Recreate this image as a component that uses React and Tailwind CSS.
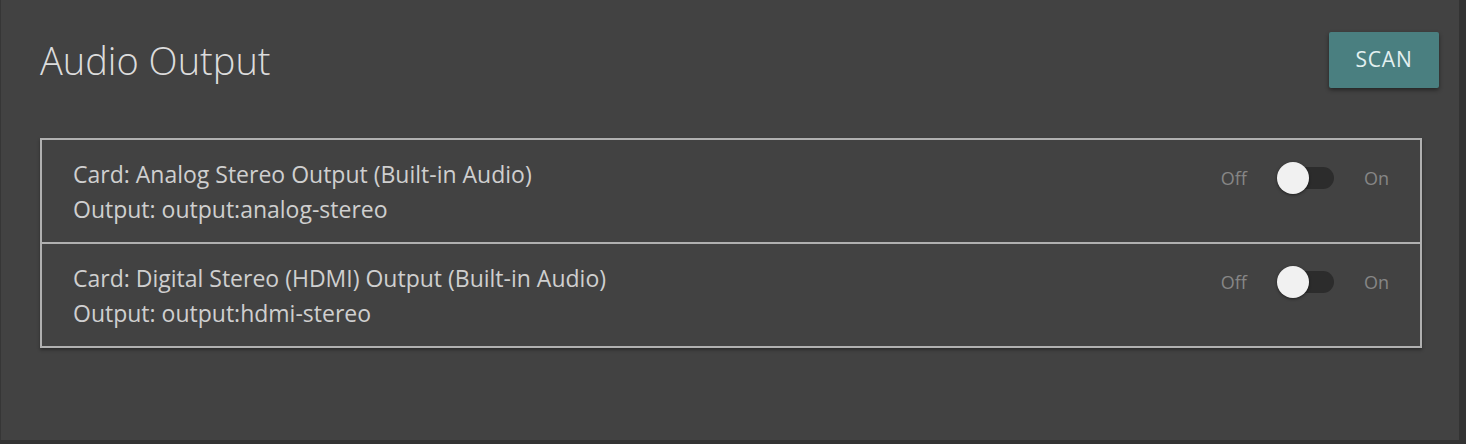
import React, { useState } from 'react';

const outputs = [
  { card: 'Analog Stereo Output (Built-in Audio)', output: 'output:analog-stereo' },
  { card: 'Digital Stereo (HDMI) Output (Built-in Audio)', output: 'output:hdmi-stereo' },
];

function Toggle({ on, onChange }) {
  return (
    <div className="flex items-center text-[18px] leading-none text-[#868686]">
      <span>Off</span>
      <button
        type="button"
        onClick={() => onChange(!on)}
        className="relative ml-[31px] mr-[30px] h-[22px] w-[56px] rounded-full bg-[#2c2c2c]"
      >
        <span
          className={`absolute top-1/2 -translate-y-1/2 h-[32px] w-[32px] rounded-full bg-[#f1f1f1] shadow-[0_1px_3px_rgba(0,0,0,0.5)] ${on ? 'left-[24px]' : 'left-[-1px]'}`}
        />
      </button>
      <span>On</span>
    </div>
  );
}

export default function App() {
  const [enabled, setEnabled] = useState(outputs.map(() => false));

  return (
    <div className="h-[444px] w-[1466px] bg-[#333333]" style={{ fontFamily: '"Open Sans", "Noto Sans", sans-serif' }}>
      <div className="h-[440px] w-[1459px] bg-[#424242] border-l border-[#363636] pl-[39px] pr-[20px] pt-[32px]">
        <div className="flex h-[56px] items-center justify-between">
          <h1 className="text-[38px] font-light text-[#dcdcdc]">Audio Output</h1>
          <button className="h-[56px] w-[110px] rounded-[2px] bg-[#4a7f80] text-[21px] tracking-[0.8px] text-[#e3f0f0] shadow-[0_2px_4px_rgba(0,0,0,0.45)]">
            SCAN
          </button>
        </div>

        <div className="mt-[50px] w-[1382px] border-2 border-[#b0b0b0] shadow-[0_2px_3px_rgba(0,0,0,0.35)]">
          {outputs.map((o, i) => (
            <div
              key={o.output}
              className={`flex items-start justify-between pl-[31px] pr-[31px] pt-[17px] pb-[15px] ${i > 0 ? 'border-t-2 border-[#b0b0b0]' : ''}`}
            >
              <div className="text-[23px] leading-[35px] text-[#cfcfcf]">
                <div>Card: {o.card}</div>
                <div>Output: {o.output}</div>
              </div>
              <div className="pt-[10px]">
                <Toggle
                  on={enabled[i]}
                  onChange={(v) => setEnabled(enabled.map((e, j) => (j === i ? v : e)))}
                />
              </div>
            </div>
          ))}
        </div>
      </div>
    </div>
  );
}
